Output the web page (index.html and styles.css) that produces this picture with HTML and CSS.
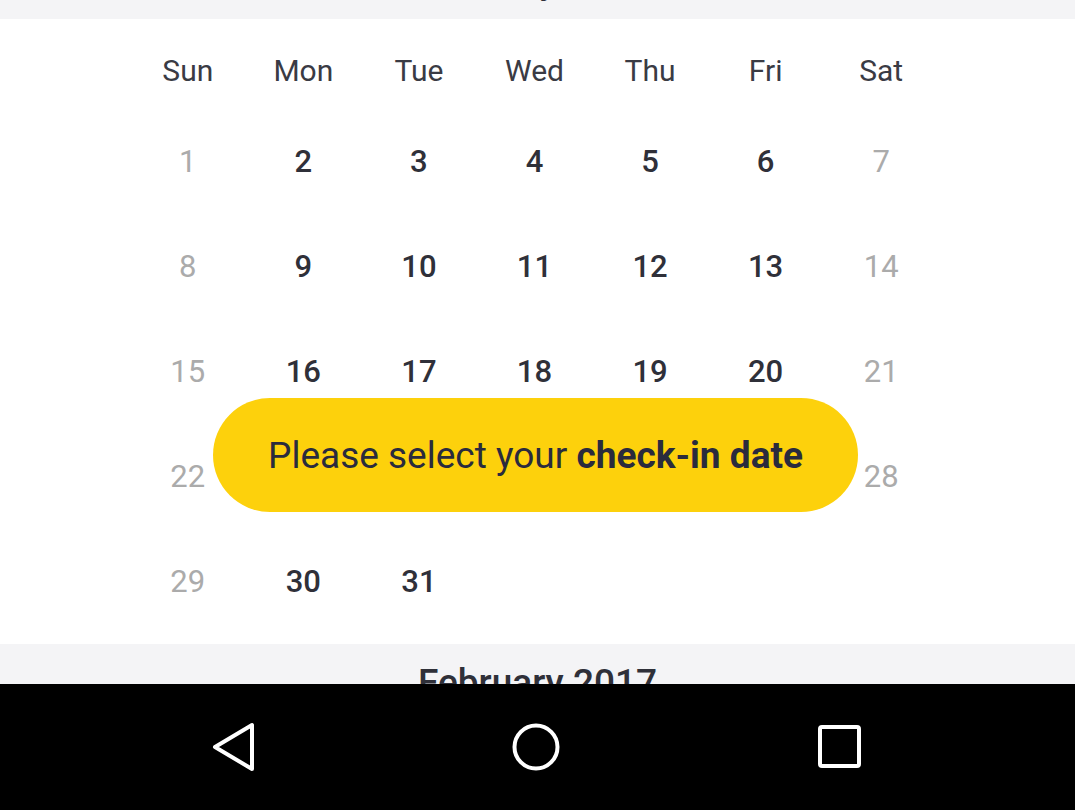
FILE: index.html
```html
<!DOCTYPE html>
<html>
<head>
<meta charset="utf-8">
<link rel="stylesheet" href="styles.css">
</head>
<body>
<div class="screen">
  <div class="viewport">
    <div class="scroller">
      <div class="month-head"><span>January 2017</span></div>
      <div class="calendar">
        <div class="weekdays">
          <span>Sun</span><span>Mon</span><span>Tue</span><span>Wed</span><span>Thu</span><span>Fri</span><span>Sat</span>
        </div>
        <div class="days">
          <span class="off">1</span><span>2</span><span>3</span><span>4</span><span>5</span><span>6</span><span class="off">7</span>
          <span class="off">8</span><span>9</span><span>10</span><span>11</span><span>12</span><span>13</span><span class="off">14</span>
          <span class="off">15</span><span>16</span><span>17</span><span>18</span><span>19</span><span>20</span><span class="off">21</span>
          <span class="off">22</span><span>23</span><span>24</span><span>25</span><span>26</span><span>27</span><span class="off">28</span>
          <span class="off">29</span><span>30</span><span>31</span><span></span><span></span><span></span><span></span>
        </div>
        <div class="toast">Please select your <b>check-in date</b></div>
      </div>
      <div class="month-head next"><span>February 2017</span></div>
    </div>
  </div>
  <nav class="navbar">
    <svg class="nav-icon" width="60" height="60" viewBox="0 0 60 60"><path d="M50 8 L50 52 L13 30 Z" fill="none" stroke="#fff" stroke-width="4" stroke-linejoin="round"/></svg>
    <svg class="nav-icon" width="60" height="60" viewBox="0 0 60 60"><circle cx="30" cy="30" r="21.5" fill="none" stroke="#fff" stroke-width="4"/></svg>
    <svg class="nav-icon" width="60" height="60" viewBox="0 0 60 60"><rect x="10" y="10" width="39" height="39" rx="2" fill="none" stroke="#fff" stroke-width="4"/></svg>
  </nav>
</div>
</body>
</html>
```
FILE: styles.css
```css
* { box-sizing: border-box; }
html, body { margin: 0; padding: 0; }
body {
  width: 1075px;
  height: 810px;
  overflow: hidden;
  font-family: Roboto, "Liberation Sans", sans-serif;
  background: #fff;
}
.screen {
  display: flex;
  flex-direction: column;
  height: 810px;
}
.viewport {
  height: 684px;
  overflow: hidden;
  background: #f4f4f6;
}
.scroller {
  margin-top: -61px;
}
.month-head {
  height: 80px;
  background: #f4f4f6;
  display: flex;
  justify-content: center;
  align-items: flex-end;
  padding-bottom: 17px;
  font-size: 37px;
  font-weight: 500;
  color: #2f3039;
}
.month-head.next {
  align-items: flex-start;
  padding-top: 17px;
  padding-bottom: 0;
}
.calendar {
  position: relative;
  background: #fff;
  padding: 0 136px 10px 130px;
}
.weekdays {
  display: grid;
  grid-template-columns: repeat(7, 1fr);
  padding-top: 32px;
  padding-bottom: 18px;
}
.weekdays span {
  height: 40px;
  line-height: 40px;
  text-align: center;
  font-size: 30px;
  color: #3a3b44;
}
.days {
  display: grid;
  grid-template-columns: repeat(7, 1fr);
  grid-auto-rows: 105px;
}
.days span {
  display: flex;
  align-items: center;
  justify-content: center;
  font-size: 31px;
  font-weight: 500;
  color: #2f3039;
}
.days span.off {
  font-weight: 400;
  color: #ababab;
}
.toast {
  position: absolute;
  left: 213px;
  top: 379px;
  width: 645px;
  height: 114px;
  border-radius: 57px;
  background: #fdd10c;
  display: flex;
  align-items: center;
  justify-content: center;
  font-size: 37px;
  color: #2a2b3d;
  white-space: pre;
}
.toast b {
  font-weight: 700;
}
.navbar {
  height: 126px;
  background: #000;
  display: flex;
  justify-content: center;
  align-items: center;
  gap: 244px;
  padding-right: 3px;
}
.nav-icon {
  display: block;
}
```
